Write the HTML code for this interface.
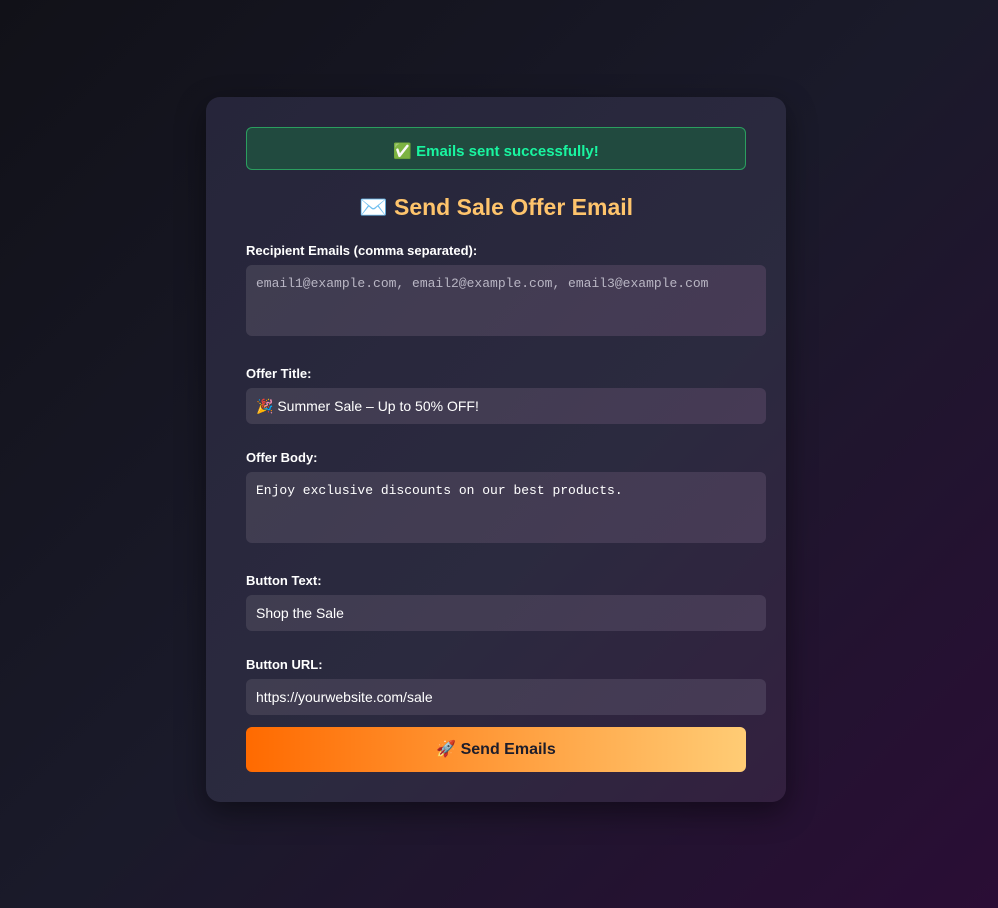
<!DOCTYPE html>
<html><head><meta charset="utf-8"><style>
*{box-sizing:content-box}
html,body{margin:0;padding:0;width:998px;height:908px;overflow:hidden}
body{background:linear-gradient(135deg,#111118 0%,#1a1a2a 50%,#2a0d35 100%);font-family:"Liberation Sans","Noto Sans CJK JP",sans-serif}
.card{position:absolute;left:206px;top:97px;width:500px;height:625px;padding:30px 40px 50px;background:linear-gradient(135deg,#26253a 0%,#2b2a3f 60%,#33203f 100%);border-radius:14px;box-shadow:0 10px 30px rgba(0,0,0,.45)}
.ok{height:41px;border:1px solid #2b9e5f;background:#214a3f;border-radius:6px;color:#19f5a0;font-weight:bold;font-size:15px;text-align:center;line-height:47px}
h2{margin:20px 0 0;height:34px;text-align:center;color:#fec46c;font-size:23px;line-height:34px;font-weight:bold}
label{display:block;color:#fff;font-weight:bold;font-size:13px;height:16px;line-height:16px}
.f{background:linear-gradient(135deg,#3f3d50,#463a55);border-radius:6px;width:500px;padding:0 10px;color:#fff;font-size:14px;margin-top:6px}
.in{height:36px;line-height:36px}
.ta{height:71px;font-family:"Liberation Mono","DejaVu Sans Mono",monospace;font-size:13px;line-height:16px;position:relative}
.ta span{position:absolute;top:11px;left:10px}
.btn{margin-top:12px;height:45px;width:500px;border-radius:6px;background:linear-gradient(90deg,#ff6a00,#ffcc75);color:#1d1d2b;font-weight:bold;font-size:16px;text-align:center;line-height:45px}
</style></head><body>
<div class="card">
<div class="ok">✅ Emails sent successfully!</div>
<h2>✉️ Send Sale Offer Email</h2>
<div style="margin-top:19px"><label>Recipient Emails (comma separated):</label><div class="f ta" style="color:#b9b6c4"><span>email1@example.com, email2@example.com, email3@example.com</span></div></div>
<div style="margin-top:30px"><label>Offer Title:</label><div class="f in">🎉 Summer Sale – Up to 50% OFF!</div></div>
<div style="margin-top:26px"><label>Offer Body:</label><div class="f ta"><span>Enjoy exclusive discounts on our best products.</span></div></div>
<div style="margin-top:30px"><label>Button Text:</label><div class="f in">Shop the Sale</div></div>
<div style="margin-top:26px"><label>Button URL:</label><div class="f in">https://yourwebsite.com/sale</div></div>
<div class="btn">🚀 Send Emails</div>
</div>
</body></html>
